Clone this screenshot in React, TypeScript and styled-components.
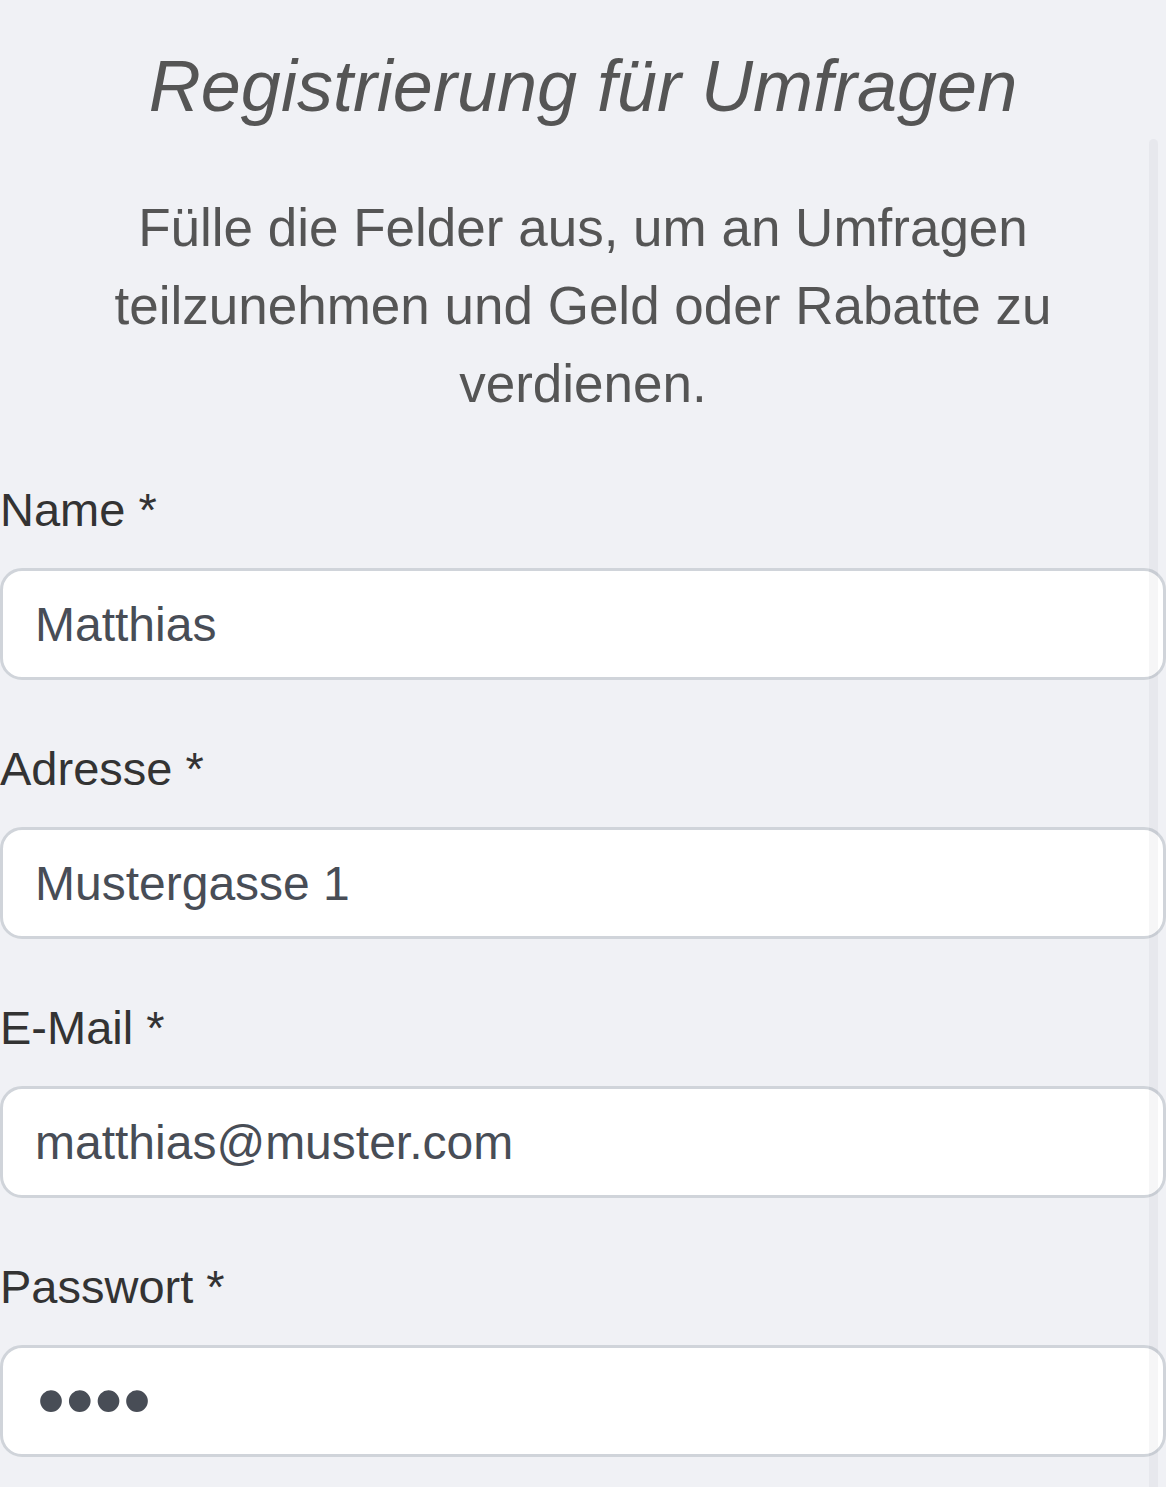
import React, {useState} from 'react';
import styled, {createGlobalStyle} from 'styled-components';

const GlobalStyle = createGlobalStyle`
    html, body {
        margin: 0;
        padding: 0;
        background: #f0f1f5;
    }

    * {
        box-sizing: border-box;
    }
`;

const Page = styled.div`
    position: relative;
    min-height: 1487px;
    overflow: hidden;
    font-family: "Liberation Sans", Arial, Helvetica, sans-serif;
    background: #f0f1f5;
`;

const Title = styled.h1`
    margin: 0;
    padding-top: 44px;
    font-size: 72px;
    line-height: 85px;
    font-style: italic;
    font-weight: 400;
    text-align: center;
    color: #555555;
`;

const Intro = styled.p`
    margin: 60px 0 0;
    padding: 0 56px;
    font-size: 53px;
    line-height: 78px;
    text-align: center;
    color: #555555;
`;

const Form = styled.form`
    display: flex;
    flex-direction: column;
    gap: 55px;
    margin-top: 53px;
`;

const Field = styled.div`
    display: flex;
    flex-direction: column;
    gap: 25px;
`;

const Label = styled.label`
    font-size: 47px;
    line-height: 67px;
    color: #333333;
`;

const Input = styled.input<{$mask?: boolean}>`
    display: block;
    width: 100%;
    height: 112px;
    margin: 0;
    padding: 0 ${(p) => (p.$mask ? '34px' : '32px')};
    border: 3px solid #d0d4da;
    border-radius: 22px;
    background: #ffffff;
    color: #484d56;
    font-family: "Liberation Sans", Arial, sans-serif;
    font-size: ${(p) => (p.$mask ? '80px' : '48px')};
    letter-spacing: ${(p) => (p.$mask ? '0.7px' : 'normal')};
    outline: none;
`;

const ScrollIndicator = styled.div`
    position: absolute;
    top: 139px;
    right: 8px;
    bottom: 0;
    width: 9px;
    border-radius: 5px 5px 0 0;
    background: rgba(20, 30, 60, 0.04);
    pointer-events: none;
    z-index: 2;
`;

type FieldDef = {
    id: string;
    label: string;
    type: string;
    initial: string;
};

const fields: FieldDef[] = [
    {id: 'name', label: 'Name *', type: 'text', initial: 'Matthias'},
    {id: 'address', label: 'Adresse *', type: 'text', initial: 'Mustergasse 1'},
    {id: 'email', label: 'E-Mail *', type: 'email', initial: 'matthias@muster.com'},
    {id: 'password', label: 'Passwort *', type: 'password', initial: 'test'},
];

const App = () => {
    const [values, setValues] = useState<Record<string, string>>(
        () => Object.fromEntries(fields.map((f) => [f.id, f.initial])),
    );

    return (
        <Page>
            <GlobalStyle/>
            <Title>{'Registrierung für Umfragen'}</Title>
            <Intro>
                {'Fülle die Felder aus, um an Umfragen teilzunehmen und Geld oder Rabatte zu verdienen.'}
            </Intro>
            <Form onSubmit={(e) => e.preventDefault()}>
                {fields.map((f) => (
                    <Field key={f.id}>
                        <Label htmlFor={f.id}>{f.label}</Label>
                        <Input
                            id={f.id}
                            type={f.type}
                            $mask={f.type === 'password'}
                            value={values[f.id]}
                            onChange={(e) => setValues({...values, [f.id]: e.target.value})}
                        />
                    </Field>
                ))}
            </Form>
            <ScrollIndicator/>
        </Page>
    );
};

export default App;
